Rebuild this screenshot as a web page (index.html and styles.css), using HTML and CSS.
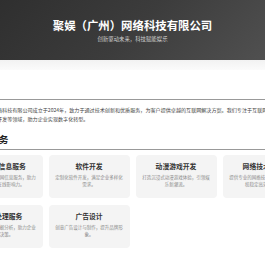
FILE: index.html
```html
<!DOCTYPE html>
<html lang="zh-CN">
<head>
<meta charset="utf-8">
<title>聚娱（广州）网络科技有限公司</title>
<link rel="stylesheet" href="styles.css">
</head>
<body>
<header class="hero">
  <h1 class="hero-title">聚娱（广州）网络科技有限公司</h1>
  <p class="hero-sub">创新驱动未来，科技赋能娱乐</p>
</header>
<nav class="navbar"></nav>
<main class="container">
  <section class="section">
    <h2 class="section-title">关于我们</h2>
    <p class="about-text">聚娱（广州）网络科技有限公司成立于2024年，致力于通过技术创新和优质服务，为客户提供卓越的互联网解决方案。我们专注于互联网信息服务、软件开发、动漫游戏开发等领域，助力企业实现数字化转型。</p>
  </section>
  <section class="section">
    <h2 class="section-title">我们的服务</h2>
    <div class="services">
      <div class="card">
        <h3 class="card-title">互联网信息服务</h3>
        <p class="card-desc">提供专业的互联网信息服务，助力企业扩大在线影响力。</p>
      </div>
      <div class="card">
        <h3 class="card-title">软件开发</h3>
        <p class="card-desc">定制化软件开发，满足企业多样化需求。</p>
      </div>
      <div class="card">
        <h3 class="card-title">动漫游戏开发</h3>
        <p class="card-desc">打造沉浸式动漫游戏体验，引领娱乐新潮流。</p>
      </div>
      <div class="card">
        <h3 class="card-title">网络技术服务</h3>
        <p class="card-desc">提供专业的网络技术支持，保障系统稳定高效运行。</p>
      </div>
      <div class="card">
        <h3 class="card-title">数据处理服务</h3>
        <p class="card-desc">提供专业的大数据分析，助力企业科学决策。</p>
      </div>
      <div class="card">
        <h3 class="card-title">广告设计</h3>
        <p class="card-desc">创意广告设计与制作，提升品牌形象。</p>
      </div>
    </div>
  </section>
</main>
</body>
</html>
```
FILE: styles.css
```css
html, body {
  margin: 0;
  padding: 0;
  background: #ffffff;
  overflow: hidden;
}
body {
  font-family: "Noto Sans CJK SC", "Noto Sans", sans-serif;
  color: #333;
}
.hero {
  height: 60px;
  background: linear-gradient(135deg, #2f2f2f 0%, #3c3c3c 50%, #505050 100%);
  color: #fff;
  text-align: center;
  display: flex;
  flex-direction: column;
  align-items: center;
  padding-top: 17px;
  box-sizing: border-box;
}
.hero-title {
  margin: 0;
  font-size: 11.4px;
  font-weight: 700;
  line-height: 16px;
  letter-spacing: 0;
}
.hero-sub {
  margin: 0;
  margin-top: 2px;
  font-size: 5.4px;
  line-height: 8px;
  color: #d0d0d0;
}
.navbar {
  height: 10px;
  background: linear-gradient(180deg, #f2f2f2 0%, #fbfbfb 100%);
}
.container {
  width: 342px;
  margin-left: calc(50% - 171px);
}
.section-title {
  margin: 0;
  font-size: 9.4px;
  font-weight: 700;
  color: #222;
  line-height: 12px;
  padding-bottom: 4px;
  border-bottom: 1px solid #999;
}
.section:first-child .section-title {
  margin-top: 13px;
}
.about-text {
  margin: 5px 0 0 0;
  font-size: 5.08px;
  line-height: 9px;
  color: #444;
}
.section + .section .section-title {
  margin-top: 10px;
}
.services {
  display: grid;
  grid-template-columns: repeat(4, 1fr);
  gap: 7px 6px;
  margin-top: 5px;
}
.card {
  background: #f4f4f4;
  border-radius: 4px;
  padding: 7px 6px 10px;
  text-align: center;
  min-height: 43px;
  box-sizing: border-box;
}
.card-title {
  margin: 0;
  font-size: 6.8px;
  font-weight: 700;
  line-height: 9px;
  color: #333;
}
.card-desc {
  margin: 3px 0 0 0;
  font-size: 4.5px;
  line-height: 6.5px;
  color: #8a8a8a;
}
```
